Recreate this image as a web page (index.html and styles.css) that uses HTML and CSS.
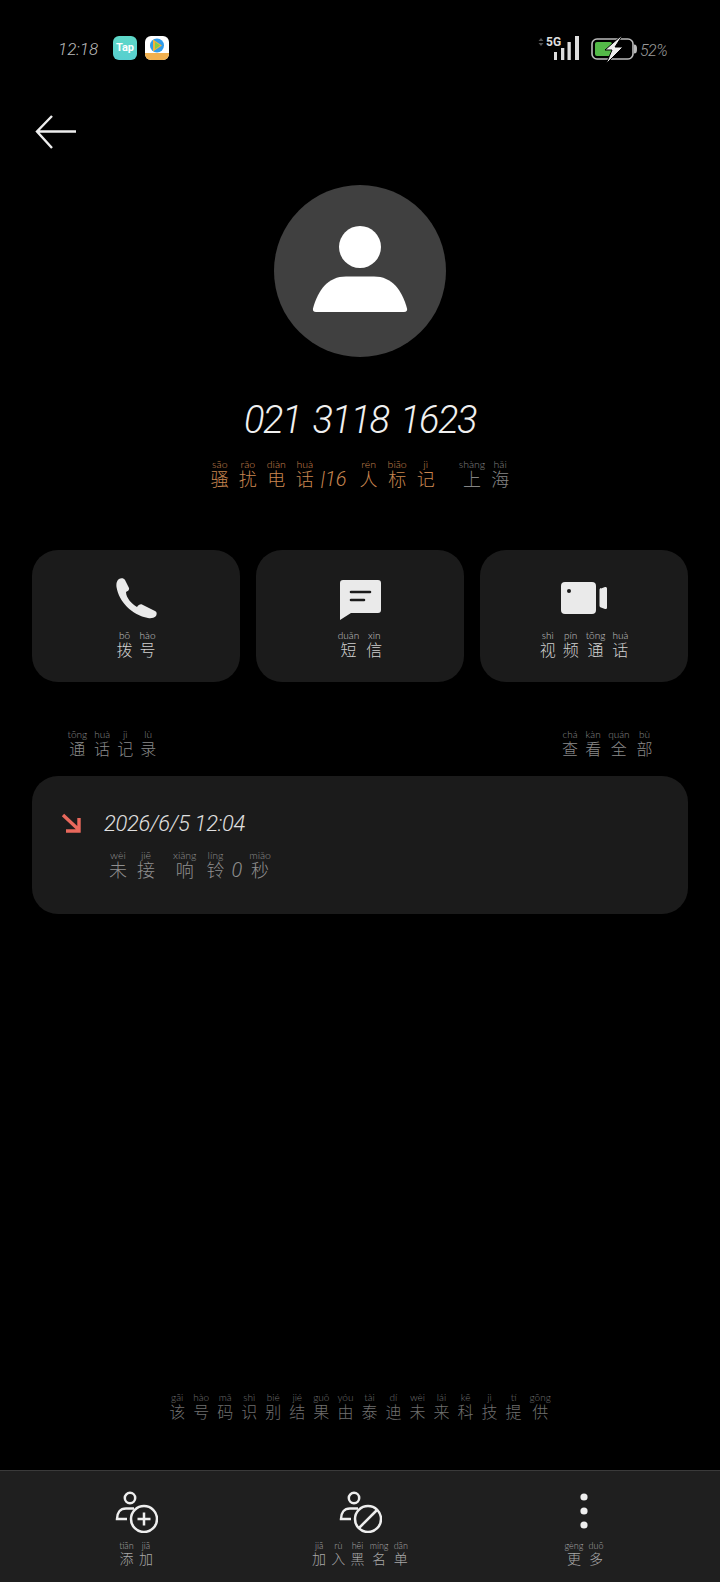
FILE: index.html
```html
<!DOCTYPE html>
<html lang="zh">
<head>
<meta charset="utf-8">
<title>021 3118 1623</title>
<link rel="stylesheet" href="styles.css">
</head>
<body>
<div class="page">
  <header class="status">
    <span class="time">12:18</span>
    <span class="app app-tap">Tap</span>
    <svg class="app" viewBox="0 0 24 24"><rect width="24" height="24" rx="6" fill="#fff"/><path d="M0 17h24v1a6 6 0 0 1-6 6H6a6 6 0 0 1-6-6z" fill="#f0b050"/><circle cx="12" cy="9.500" r="7" fill="#2f9bea"/><path d="M8 3.500 17 9.500 8 15.500z" fill="#f4b23c"/><path d="M10 6 15 9.500 10 13z" fill="#7ed04a"/></svg>
    <span class="status-fill"></span>
    <svg class="signal" viewBox="0 0 42 24"><path d="M3 2 5.500 5H.5zM3 10 .5 7h5z" fill="#555"/><rect x="16" y="16" width="3" height="8" fill="#ddd"/><rect x="23" y="12" width="3.300" height="12" fill="#ddd"/><rect x="29.500" y="6" width="3.300" height="18" fill="#ddd"/><rect x="37" width="4" height="24" fill="#ddd"/><text x="8" y="9.500" class="five-g">5G</text></svg>
    <svg class="battery" viewBox="0 0 46 28"><rect x="1" y="3" width="41" height="20" rx="5" fill="none" stroke="#bbb" stroke-width="1.600"/><path d="M43 8.500c2.500 0 3 1.500 3 4.500s-.5 4.500-3 4.500z" fill="#bbb"/><rect x="4" y="6" width="17" height="14" rx="2" fill="#54b948"/><path d="M30 0 14 14h7l-6 14 17-17h-8l7-11z" fill="#eee" stroke="#000"/></svg>
    <span class="percent">52%</span>
  </header>

  <svg class="back" viewBox="0 0 42 34"><path d="M41 16.500H2M17 1 2 16.500 17 33" fill="none" stroke="#eee" stroke-width="2.400"/></svg>

  <svg class="avatar" viewBox="0 0 172 172"><circle cx="86" cy="86" r="86" fill="#404040"/><circle cx="86" cy="62" r="21"/><path d="M42 127c-2.500 0-3.500-1.500-3-3.500C44 105 54 91.500 72 91.500h28c18 0 28 13.500 33 32 .5 2-.5 3.500-3 3.500z"/></svg>

  <h1 class="number">021 3118 1623</h1>

  <p class="tags">
    <span class="tag-warn"><ruby>骚<rt>sāo</rt></ruby><ruby>扰<rt>rǎo</rt></ruby><ruby>电<rt>diàn</rt></ruby><ruby>话<rt>huà</rt></ruby><span class="tag-count">|16</span><ruby>人<rt>rén</rt></ruby><ruby>标<rt>biāo</rt></ruby><ruby>记<rt>jì</rt></ruby></span><span class="tag-place"><ruby>上<rt>shàng</rt></ruby><ruby>海<rt>hǎi</rt></ruby></span>
  </p>

  <nav class="actions">
    <a class="action">
      <svg class="ic-phone" viewBox="0 0 41 41"><path d="M3 1C5-.5 8 0 9 2l4 8c.5 2-1 3-3 4 0 6 6 12 11 15 1.500-2 3-3 5-2.500L39 33c2 1 2 3 1 5-2 2-5 2.500-8 2C16 37 3 24 .5 9 0 5 1 2.500 3 1z" fill="#eaeaea"/></svg>
      <span class="action-label"><ruby>拨<rt>bō</rt></ruby><ruby>号<rt>hào</rt></ruby></span>
    </a>
    <a class="action">
      <svg class="ic-msg" viewBox="0 0 41 40"><path d="M3 0h35a3 3 0 0 1 3 3v27a3 3 0 0 1-3 3H11L0 40V3a3 3 0 0 1 3-3z" fill="#eaeaea"/><path d="M11 12h19M11 20h13" stroke="#1b1b1b" stroke-width="2.600" stroke-linecap="round"/></svg>
      <span class="action-label"><ruby>短<rt>duǎn</rt></ruby><ruby>信<rt>xìn</rt></ruby></span>
    </a>
    <a class="action">
      <svg class="ic-video" viewBox="0 0 46 32"><rect width="35" height="32" rx="4" fill="#eaeaea"/><circle cx="8" cy="9" r="2" fill="#1b1b1b"/><path d="M40 6.500l4-1.500c1-.3 2 .3 2 1.500v19c0 1.200-1 1.800-2 1.500l-4-1.500c-1-.4-1.500-1-1.500-2v-15.500c0-1 .5-1.600 1.500-2z" fill="#eaeaea"/></svg>
      <span class="action-label"><ruby>视<rt>shì</rt></ruby><ruby>频<rt>pín</rt></ruby><ruby>通<rt>tōng</rt></ruby><ruby>话<rt>huà</rt></ruby></span>
    </a>
  </nav>

  <div class="section-head">
    <span><ruby>通<rt>tōng</rt></ruby><ruby>话<rt>huà</rt></ruby><ruby>记<rt>jì</rt></ruby><ruby>录<rt>lù</rt></ruby></span>
    <span><ruby>查<rt>chá</rt></ruby><ruby>看<rt>kàn</rt></ruby><ruby>全<rt>quán</rt></ruby><ruby>部<rt>bù</rt></ruby></span>
  </div>

  <section class="log">
    <svg class="ic-missed" viewBox="0 0 20 20"><path d="M2 2 17 16M18 5v13H5" fill="none" stroke="#e8685c" stroke-width="3.400"/></svg>
    <div class="log-body">
      <div class="log-date">2026/6/5 12:04</div>
      <div class="log-sub"><ruby>未<rt>wèi</rt></ruby><ruby>接<rt>jiē</rt></ruby><span class="log-gap"></span><ruby>响<rt>xiǎng</rt></ruby><ruby>铃<rt>líng</rt></ruby><span class="log-zero">0</span><ruby>秒<rt>miǎo</rt></ruby></div>
    </div>
  </section>

  <div class="spacer"></div>

  <p class="credit"><ruby>该<rt>gāi</rt></ruby><ruby>号<rt>hào</rt></ruby><ruby>码<rt>mǎ</rt></ruby><ruby>识<rt>shì</rt></ruby><ruby>别<rt>bié</rt></ruby><ruby>结<rt>jié</rt></ruby><ruby>果<rt>guǒ</rt></ruby><ruby>由<rt>yóu</rt></ruby><ruby>泰<rt>tài</rt></ruby><ruby>迪<rt>dí</rt></ruby><ruby>未<rt>wèi</rt></ruby><ruby>来<rt>lái</rt></ruby><ruby>科<rt>kē</rt></ruby><ruby>技<rt>jì</rt></ruby><ruby>提<rt>tí</rt></ruby><ruby>供<rt>gōng</rt></ruby></p>

  <footer class="toolbar">
    <a class="tool">
      <svg class="ic-tool" viewBox="0 0 44 42"><circle cx="16" cy="7" r="5.200" fill="none" stroke="#eee" stroke-width="2.500"/><path d="M20 17.500H12C6 17.500 3 22 3 28H13" fill="none" stroke="#eee" stroke-width="2.500"/><circle cx="30" cy="28" r="13" fill="none" stroke="#eee" stroke-width="2.500"/><path d="M30 21.500v13M23.500 28h13" stroke="#eee" stroke-width="2.500"/></svg>
      <span class="tool-label"><ruby>添<rt>tiān</rt></ruby><ruby>加<rt>jiā</rt></ruby></span>
    </a>
    <a class="tool">
      <svg class="ic-tool" viewBox="0 0 44 42"><circle cx="16" cy="7" r="5.200" fill="none" stroke="#eee" stroke-width="2.500"/><path d="M20 17.500H12C6 17.500 3 22 3 28H13" fill="none" stroke="#eee" stroke-width="2.500"/><circle cx="30" cy="28" r="13" fill="none" stroke="#eee" stroke-width="2.500"/><path d="M21 37 39 19" stroke="#eee" stroke-width="2.500"/></svg>
      <span class="tool-label"><ruby>加<rt>jiā</rt></ruby><ruby>入<rt>rù</rt></ruby><ruby>黑<rt>hēi</rt></ruby><ruby>名<rt>míng</rt></ruby><ruby>单<rt>dān</rt></ruby></span>
    </a>
    <a class="tool">
      <svg class="ic-tool" viewBox="0 0 44 42"><circle cx="22" cy="6" r="3.600" fill="#eee"/><circle cx="22" cy="20" r="3.600" fill="#eee"/><circle cx="22" cy="34" r="3.600" fill="#eee"/></svg>
      <span class="tool-label"><ruby>更<rt>gèng</rt></ruby><ruby>多<rt>duō</rt></ruby></span>
    </a>
  </footer>
</div>
</body>
</html>
```
FILE: styles.css
```css
* { box-sizing: border-box; }
html, body { margin: 0; padding: 0; background: #000; }
body { font-family: "Noto Sans CJK SC", "Noto Sans", sans-serif; font-weight: 300; }
p, h1 { margin: 0; }
rt { font-family: "Lato", "Noto Sans", sans-serif; font-weight: 300; letter-spacing: 0; }
ruby { ruby-position: over; }

.page { width: 720px; height: 1582px; display: flex; flex-direction: column; overflow: hidden; }

/* status bar */
.status { display: flex; align-items: flex-start; height: 115px; padding: 36px 50px 0 58px; }
.time { width: 55px; margin-top: 4px; font: italic 300 17px/18px "Roboto", sans-serif; color: #bbb; letter-spacing: 0; }
.app { width: 24px; height: 24px; margin-right: 8px; flex: none; }
.app-tap { border-radius: 6px; background: linear-gradient(#5ed8c8, #58cfd0); color: #fff; font: 700 11px/24px "Roboto", sans-serif; text-align: center; }
.status-fill { flex: 1; }
.signal { width: 42px; height: 24px; margin-right: 11px; }
.five-g { font: 700 12px "Roboto", sans-serif; fill: #ddd; }
.battery { width: 46px; height: 28px; margin-right: 3px; }
.percent { width: 30px; margin-top: 6px; font: italic 300 16px/18px "Roboto", sans-serif; color: #999; letter-spacing: -.5px; }

.back { width: 42px; height: 34px; margin-left: 35px; flex: none; }

.avatar { width: 172px; height: 172px; margin: 36px auto 0; flex: none; fill: #fff; }

.number { margin-top: 41px; height: 44px; text-align: center; font: italic 300 38px/44px "Roboto", sans-serif; color: #f0f0f0; letter-spacing: -1.5px; word-spacing: 4px; }

.tags { margin-top: 17px; height: 44px; padding-right: 2px; text-align: center; font-size: 18px; line-height: 26px; white-space: nowrap; }
.tags rt { font-size: 10.5px; }
.tags ruby { margin: 0 5px; }
.tag-warn { color: #c98650; }
.tag-count { margin: 0 8px 0 2px; font: italic 300 20px "Roboto", sans-serif; }
.tag-place { margin-left: 16px; color: #858585; }
.tag-place ruby { margin: 0 3px; }

/* actions */
.actions { display: grid; grid-template-columns: repeat(3, 1fr); gap: 16px; margin-top: 47px; padding: 0 32px; flex: none; }
.action { display: flex; flex-direction: column; align-items: center; height: 132px; padding-top: 28px; border-radius: 26px; background: #1b1b1b; }
.ic-phone { width: 41px; height: 41px; }
.ic-msg { width: 41px; height: 40px; margin-top: 2px; margin-bottom: -1px; }
.ic-video { width: 46px; height: 32px; margin-top: 4px; margin-bottom: 5px; }
.action-label { margin-top: 11px; font-size: 16px; line-height: 24px; color: #d0d0d0; white-space: nowrap; }
.action-label rt { font-size: 10px; color: #c8c8c8; }
.action-label ruby { margin: 0 3.500px; }

.section-head { display: flex; justify-content: space-between; margin-top: 47px; padding: 0 64px; height: 47px; font-size: 16px; line-height: 24px; color: #8a8a8a; }
.section-head rt { font-size: 10px; }
.section-head ruby { margin: 0 3.500px; }

.log { display: flex; height: 138px; padding: 37px 0 0 29px; border-radius: 26px; margin: 0 32px; background: #1b1b1b; flex: none; }
.ic-missed { width: 20px; height: 20px; flex: none; }
.log-body { margin-left: 23px; margin-top: -2px; }
.log-date { font: italic 300 22px/26px "Roboto", sans-serif; color: #e0e0e0; letter-spacing: -.3px; }
.log-sub { margin-top: 13px; font-size: 18px; line-height: 26px; color: #8f8f8f; white-space: nowrap; }
.log-sub rt { font-size: 10.5px; }
.log-sub ruby { margin: 0 5px; }
.log-gap { display: inline-block; width: 8px; }
.log-zero { margin: 0 2px; font: italic 300 20px "Roboto", sans-serif; }

.spacer { flex: 1; }

.credit { height: 78px; text-align: center; font-size: 16px; line-height: 24px; color: #707070; white-space: nowrap; }
.credit rt { font-size: 10px; }
.credit ruby { margin: 0 4px; }

.toolbar { display: grid; grid-template-columns: repeat(3, 1fr); gap: 16px; height: 112px; padding: 20px 32px 0; border-top: 1px solid #3a3a3a; background: #1f1f1f; flex: none; }
.tool { display: flex; flex-direction: column; align-items: center; }
.ic-tool { width: 44px; height: 42px; }
.tool-label { margin-top: 8px; font-size: 14px; line-height: 20px; color: #a8a8a8; white-space: nowrap; }
.tool-label rt { font-size: 9px; }
.tool-label ruby { margin: 0 2.600px; }
```
